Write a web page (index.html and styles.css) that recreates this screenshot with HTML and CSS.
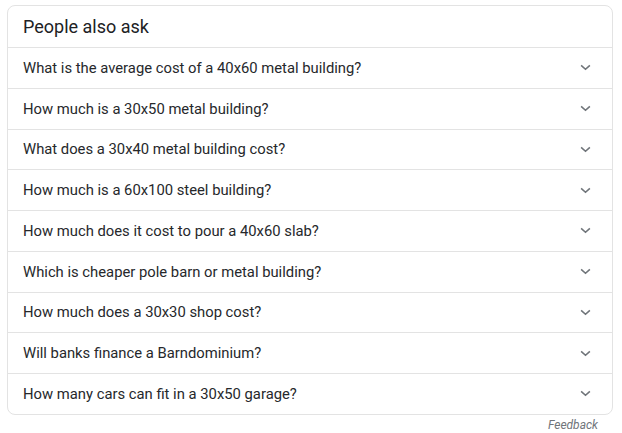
FILE: index.html
```html
<!DOCTYPE html>
<html lang="en">
<head>
    <meta charset="UTF-8">
    <title>People also ask</title>
    <link rel="stylesheet" href="styles.css">
</head>
<body>
    <div class="paa">
        <div class="paaTitle">People also ask</div>
        <div class="question"><span>What is the average cost of a 40x60 metal building?</span><svg class="chev" viewBox="0 0 12 8"><path d="M1 1.5 6 6 11 1.5"/></svg></div>
        <div class="question"><span>How much is a 30x50 metal building?</span><svg class="chev" viewBox="0 0 12 8"><path d="M1 1.5 6 6 11 1.5"/></svg></div>
        <div class="question"><span>What does a 30x40 metal building cost?</span><svg class="chev" viewBox="0 0 12 8"><path d="M1 1.5 6 6 11 1.5"/></svg></div>
        <div class="question"><span>How much is a 60x100 steel building?</span><svg class="chev" viewBox="0 0 12 8"><path d="M1 1.5 6 6 11 1.5"/></svg></div>
        <div class="question"><span>How much does it cost to pour a 40x60 slab?</span><svg class="chev" viewBox="0 0 12 8"><path d="M1 1.5 6 6 11 1.5"/></svg></div>
        <div class="question"><span>Which is cheaper pole barn or metal building?</span><svg class="chev" viewBox="0 0 12 8"><path d="M1 1.5 6 6 11 1.5"/></svg></div>
        <div class="question"><span>How much does a 30x30 shop cost?</span><svg class="chev" viewBox="0 0 12 8"><path d="M1 1.5 6 6 11 1.5"/></svg></div>
        <div class="question"><span>Will banks finance a Barndominium?</span><svg class="chev" viewBox="0 0 12 8"><path d="M1 1.5 6 6 11 1.5"/></svg></div>
        <div class="question"><span>How many cars can fit in a 30x50 garage?</span><svg class="chev" viewBox="0 0 12 8"><path d="M1 1.5 6 6 11 1.5"/></svg></div>
    </div>
    <div class="feedback">Feedback</div>
</body>
</html>
```

FILE: styles.css
```css
* {
    margin: 0;
    padding: 0;
    box-sizing: border-box;
}
body {
    background: #fff;
    padding: 5px 9px 0 7px;
    font-family: Roboto, "Liberation Sans", sans-serif;
    color: #202124;
}
.paa {
    border: 1px solid #e3e3e3;
    border-radius: 8px;
    overflow: hidden;
}
.paaTitle {
    height: 41px;
    padding-left: 15px;
    display: flex;
    align-items: center;
    font-size: 18px;
    color: #202124;
}
.question {
    height: 40.75px;
    border-top: 1px solid #e3e3e3;
    padding: 0 21px 0 15px;
    display: flex;
    align-items: center;
    justify-content: space-between;
    font-size: 14.8px;
    color: #26282b;
}
.chev {
    width: 11px;
    height: 7px;
    fill: none;
    stroke: #70757a;
    stroke-width: 1.8;
}
.feedback {
    text-align: right;
    padding: 2px 15px 0 0;
    font-size: 12px;
    line-height: 16px;
    font-style: italic;
    color: #70757a;
}
```
